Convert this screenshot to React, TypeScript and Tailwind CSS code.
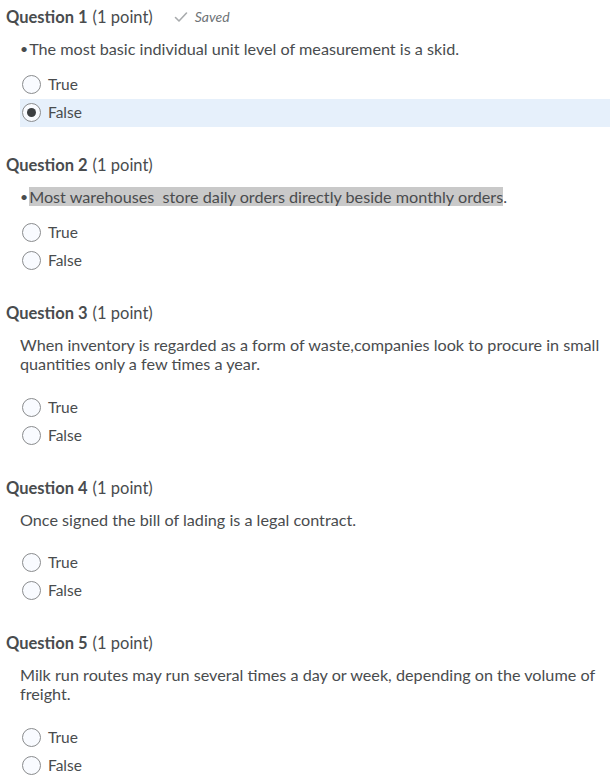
import React from "react";

type Question = {
  n: number;
  text: string;
  bullet?: boolean;
  marked?: boolean;
  saved?: boolean;
  answer?: "True" | "False";
  gap: string;
};

const QUESTIONS: Question[] = [
  {
    n: 1,
    text: "The most basic individual unit level of measurement is a skid.",
    bullet: true,
    saved: true,
    answer: "False",
    gap: "mt-[12px]",
  },
  {
    n: 2,
    text: "Most warehouses\u00a0 store daily orders directly beside monthly orders",
    bullet: true,
    marked: true,
    gap: "mt-[12px]",
  },
  {
    n: 3,
    text: "When inventory is regarded as a form of waste,companies look to procure in small quantities only a few times a year.",
    gap: "mt-[20px]",
  },
  {
    n: 4,
    text: "Once signed the bill of lading is a legal contract.",
    gap: "mt-[19px]",
  },
  {
    n: 5,
    text: "Milk run routes may run several times a day or week, depending on the volume of freight.",
    gap: "mt-[20px]",
  },
];

function Radio({ checked }: { checked?: boolean }) {
  return (
    <span className="flex h-[19px] w-[19px] shrink-0 items-center justify-center rounded-full border border-[#8a8c8e] bg-[#f9fbff]">
      {checked && <span className="h-[9px] w-[9px] rounded-full bg-[#3c3f41]" />}
    </span>
  );
}

function Option({ label, checked }: { label: string; checked?: boolean }) {
  return (
    <div
      className={`flex h-[28.5px] items-center pl-[2px] ${
        checked ? "bg-[#e6f0fb]" : ""
      }`}
    >
      <Radio checked={checked} />
      <span className="ml-[7px] text-[15.5px]">{label}</span>
    </div>
  );
}

function QuestionBlock({ q }: { q: Question }) {
  return (
    <section className="mb-[26px]">
      <h2 className="flex h-6 items-center px-[6px] text-[16.5px] leading-6">
        <span className="font-bold">Question {q.n}</span>
        <span className="ml-[5px]">(1 point)</span>
        {q.saved && (
          <span className="ml-[21px] flex items-center gap-[7px] text-[14px] italic text-[#6e7376]">
            <svg width="14" height="12" viewBox="0 0 14 12" fill="none">
              <path
                d="M1.5 6.5 L5 10 L12.5 2"
                stroke="#a8abad"
                strokeWidth="1.6"
                strokeLinecap="round"
                strokeLinejoin="round"
              />
            </svg>
            Saved
          </span>
        )}
      </h2>

      <div className="mt-[10px] pl-5 pr-2 text-[16.2px] leading-[19px]">
        {q.bullet ? (
          <p className="flex items-center">
            <span className="mr-[1px] text-[14px]">•</span>
            {q.marked ? (
              <>
                <span className="bg-[#c9c9c9]">{q.text}</span>.
              </>
            ) : (
              <span>{q.text}</span>
            )}
          </p>
        ) : (
          <p>{q.text}</p>
        )}
      </div>

      <div className={`${q.gap} pl-5`}>
        <Option label="True" checked={q.answer === "True"} />
        <Option label="False" checked={q.answer === "False"} />
      </div>
    </section>
  );
}

export default function App() {
  return (
    <main className="min-h-[775px] w-[610px] overflow-hidden bg-white pt-[5px] font-['Lato',sans-serif] text-[#494c4e]">
      {QUESTIONS.map((q) => (
        <QuestionBlock key={q.n} q={q} />
      ))}
    </main>
  );
}
